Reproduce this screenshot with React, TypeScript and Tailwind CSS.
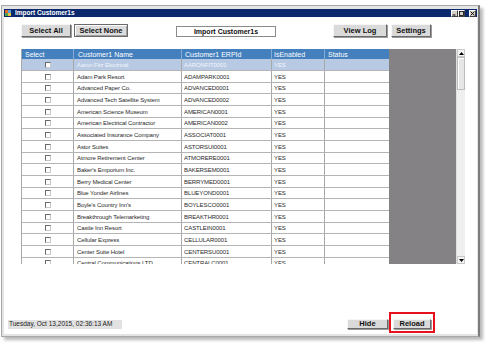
import React from "react";

const rows: [string, string][] = [
  ["Aaron Fitz Electrical", "AARONFIT0001"],
  ["Adam Park Resort", "ADAMPARK0001"],
  ["Advanced Paper Co.", "ADVANCED0001"],
  ["Advanced Tech Satellite System", "ADVANCED0002"],
  ["American Science Museum", "AMERICAN0001"],
  ["American Electrical Contractor", "AMERICAN0002"],
  ["Associated Insurance Company", "ASSOCIAT0001"],
  ["Astor Suites", "ASTORSUI0001"],
  ["Atmore Retirement Center", "ATMORERE0001"],
  ["Baker's Emporium Inc.", "BAKERSEM0001"],
  ["Berry Medical Center", "BERRYMED0001"],
  ["Blue Yonder Airlines", "BLUEYOND0001"],
  ["Boyle's Country Inn's", "BOYLESCO0001"],
  ["Breakthrough Telemarketing", "BREAKTHR0001"],
  ["Castle Inn Resort", "CASTLEIN0001"],
  ["Cellular Express", "CELLULAR0001"],
  ["Center Suite Hotel", "CENTERSU0001"],
  ["Central Communications LTD", "CENTRALC0001"],
];

function WinBtn({ children, w, h, cls = "" }: { children: React.ReactNode; w: string; h: string; cls?: string }) {
  return (
    <div
      className={`${w} ${h} ${cls} flex items-center justify-center bg-[#dadada] border border-t-[#f6f6f6] border-l-[#f6f6f6] border-b-[#6a6a6a] border-r-[#6a6a6a] shadow-[1px_1px_0_#9a9a9a] text-[7.5px] font-bold text-[#101010] leading-none whitespace-nowrap`}
    >
      {children}
    </div>
  );
}

function Caption({ kind }: { kind: "min" | "max" | "close" }) {
  return (
    <div className="w-[7px] h-[7px] bg-[#d4d0c8] border border-t-white border-l-white border-b-[#404040] border-r-[#404040] flex items-center justify-center">
      <svg width="5" height="5" viewBox="0 0 5 5">
        {kind === "min" && <rect x="0.5" y="3.5" width="3" height="1" fill="#000" />}
        {kind === "max" && <rect x="0.5" y="0.5" width="4" height="4" fill="none" stroke="#000" strokeWidth="0.8" />}
        {kind === "close" && <path d="M0.6 0.6 L4.4 4.4 M4.4 0.6 L0.6 4.4" stroke="#000" strokeWidth="0.9" />}
      </svg>
    </div>
  );
}

export default function App() {
  return (
    <div className="w-[491px] h-[344px] bg-white pt-[5px] pl-[1px] overflow-hidden font-['Liberation_Sans',Arial,sans-serif]">
      <div className="w-[479px] h-[332px] flex flex-col border border-[#a8a8a8] border-r-2 border-r-[#7c7c7c] bg-[#e4e4e4] pt-[3px] pl-[2px] pr-[1px] pb-[2px] shadow-[3px_3px_3px_rgba(0,0,0,0.28)]">
        {/* Title bar */}
        <div className="h-[8px] flex items-center bg-[#0b2a6d] shrink-0">
          <div className="ml-[1px] w-[6px] h-[6px] grid grid-cols-2 grid-rows-2">
            <div className="bg-[#e86a2c]" />
            <div className="bg-[#5aa0e0]" />
            <div className="bg-[#4aa84a]" />
            <div className="bg-[#f0c040]" />
          </div>
          <span className="ml-[4px] text-[6.5px] font-bold text-white leading-none">Import Customer1s</span>
          <div className="ml-auto flex items-center gap-0 mr-[1px]">
            <Caption kind="min" />
            <Caption kind="max" />
            <div className="w-[4px]" />
            <Caption kind="close" />
          </div>
        </div>

        {/* Client area */}
        <div className="h-[317px] bg-white flex flex-col">
          {/* Top buttons */}
          <div className="mt-[7px] ml-[17px] flex items-start">
            <WinBtn w="w-[50px]" h="h-[13px]">Select All</WinBtn>
            <div className="ml-[3px] w-[54px] h-[13px] flex items-center justify-center bg-[#dcdcdc] border border-[#6a6a6a] shadow-[inset_1px_1px_0_#ffffff,inset_-1px_-1px_0_#a0a0a0] text-[7.5px] font-bold text-[#101010] leading-none">
              Select None
            </div>
            <div className="ml-[48px] mt-[2px] w-[100px] h-[11px] flex items-center justify-center bg-white border border-[#8a8a8a] text-[7px] font-bold text-[#101010] leading-none">
              Import Customer1s
            </div>
            <WinBtn w="w-[54px]" h="h-[13px]" cls="ml-[57px]">View Log</WinBtn>
            <WinBtn w="w-[40px]" h="h-[13px]" cls="ml-[4px]">Settings</WinBtn>
          </div>

          {/* Grid */}
          <div className="mt-[12px] ml-[17px] flex h-[215px]">
            <div className="w-[368px] flex flex-col overflow-hidden border-l border-[#a8a8a8] bg-white">
              <div className="h-[10px] shrink-0 flex bg-[#4480bd] text-white text-[7px] leading-none">
                <div className="w-[52px] flex items-center pl-[3px] border-r border-[#86acd6]">Select</div>
                <div className="w-[108px] flex items-center pl-[4px] border-r border-[#86acd6]">Customer1 Name</div>
                <div className="w-[90px] flex items-center pl-[3px] border-r border-[#86acd6]">Customer1 ERPId</div>
                <div className="w-[53px] flex items-center pl-[2px] border-r border-[#86acd6]">IsEnabled</div>
                <div className="w-[64px] flex items-center pl-[3px]">Status</div>
              </div>
              {rows.map(([name, id], i) => {
                const sel = i === 0;
                return (
                  <div
                    key={id}
                    className={`${i % 3 === 2 ? "h-[11px]" : "h-[12px]"} shrink-0 flex border-b border-[#b4b4b4] text-[6px] leading-none tracking-[-0.1px] ${
                      sel ? "bg-[#b7c9e3] text-[#f2f6fb]" : "bg-white text-[#2a2a2a]"
                    }`}
                  >
                    <div className="w-[52px] flex items-center justify-center border-r border-[#a8a8a8]">
                      <div className="w-[6px] h-[6px] bg-white border border-t-[#6a6a6a] border-l-[#6a6a6a] border-b-[#c8c8c8] border-r-[#c8c8c8]" />
                    </div>
                    <div className="w-[108px] flex items-center pl-[3px] border-r border-[#a8a8a8] whitespace-nowrap overflow-hidden">{name}</div>
                    <div className="w-[90px] flex items-center pl-[2px] border-r border-[#a8a8a8] whitespace-nowrap">{id}</div>
                    <div className="w-[53px] flex items-center pl-[2px] border-r border-[#a8a8a8]">YES</div>
                    <div className="w-[64px]" />
                  </div>
                );
              })}
            </div>
            <div className="w-[67px] bg-[#858285]" />
            <div className="w-[9px] flex flex-col bg-[#efefef] border-l border-[#e0e0e0]">
              <div className="h-[8px] flex items-center justify-center bg-[#f4f4f4] border border-[#c8c8c8]">
                <svg width="5" height="3" viewBox="0 0 5 3">
                  <path d="M2.5 0 L5 3 L0 3 Z" fill="#000" />
                </svg>
              </div>
              <div className="h-[33px] bg-[#e6e6e6] border border-[#bcbcbc] shadow-[inset_1px_1px_0_#ffffff]" />
              <div className="flex-1" />
              <div className="h-[8px] flex items-center justify-center bg-[#f4f4f4] border border-[#c8c8c8]">
                <svg width="5" height="3" viewBox="0 0 5 3">
                  <path d="M0 0 L5 0 L2.5 3 Z" fill="#000" />
                </svg>
              </div>
            </div>
          </div>

          {/* Bottom row */}
          <div className="mt-auto pb-[1px] pl-[4px] flex items-end">
            <div className="w-[114px] h-[9px] mb-[4px] flex items-center pl-[1px] bg-[#e2e2e2] text-[6.5px] text-[#202020] leading-none whitespace-nowrap">
              Tuesday, Oct 13,2015, 02:36:13 AM
            </div>
            <WinBtn w="w-[41px]" h="h-[10px]" cls="ml-[225px] mb-[4px]">Hide</WinBtn>
            <div className="ml-[1px] w-[46px] h-[21px] border-2 border-[#e5121c] pt-[5px] pl-[2px]">
              <WinBtn w="w-[38px]" h="h-[10px]">Reload</WinBtn>
            </div>
          </div>
        </div>
      </div>
    </div>
  );
}
